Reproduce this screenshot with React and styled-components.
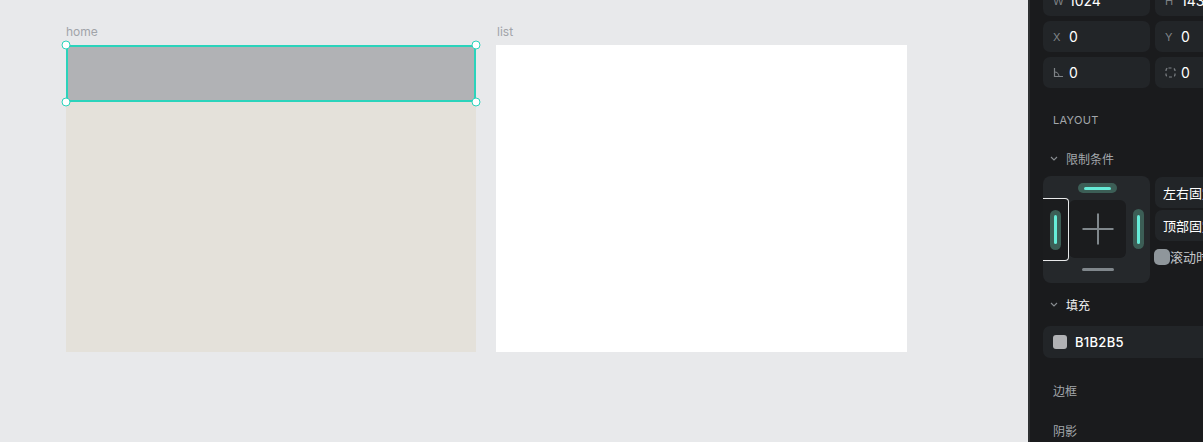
import styled, { createGlobalStyle } from "styled-components";

const GlobalStyle = createGlobalStyle`
    html, body {
        margin: 0;
        padding: 0;
        height: 100%;
        overflow: hidden;
        background: #e8e9eb;
    }
    body {
        font-family: "Inter", "Noto Sans CJK SC", sans-serif;
    }
    #root {
        height: 100%;
    }
`;

const Editor = styled.div`
    display: flex;
    width: 100%;
    height: 442px;
    overflow: hidden;
`;

/* ---------- canvas ---------- */

const Canvas = styled.div`
    flex: 0 0 1028px;
    display: flex;
    gap: 20px;
    padding: 24px 0 0 66px;
    box-sizing: border-box;
    background: #e8e9eb;
`;

const Board = styled.div`
    display: flex;
    flex-direction: column;
`;

const BoardName = styled.div`
    height: 16px;
    margin-bottom: 5px;
    padding-left: ${(p) => p.$indent || 0}px;
    font-size: 12px;
    line-height: 16px;
    color: #a1a4a9;
`;

const BoardPage = styled.div`
    display: flex;
    flex-direction: column;
    width: ${(p) => p.$width}px;
    height: 307px;
    background: ${(p) => p.$bg};
`;

const NavBar = styled.div`
    position: relative;
    height: 57px;
    background: #b1b2b5;
`;

const Selection = styled.div`
    position: absolute;
    inset: 0;
    border: 2px solid #2bd3bb;
    pointer-events: none;
`;

const Handle = styled.span`
    position: absolute;
    width: 7px;
    height: 7px;
    border-radius: 50%;
    background: #fff;
    border: 1.5px solid #2bd3bb;
    transform: translate(-50%, -50%);
    left: ${(p) => (p.$right ? "100%" : "0px")};
    top: ${(p) => (p.$bottom ? "100%" : "0px")};
`;

/* ---------- inspector ---------- */

const Panel = styled.div`
    flex: 0 0 300px;
    display: flex;
    flex-direction: column;
    padding-left: 13px;
    background: #1a1b1d;
    border-left: 2px solid #2e3032;
    overflow: hidden;
    & > * {
        flex-shrink: 0;
    }
`;

const FieldGrid = styled.div`
    display: grid;
    grid-template-columns: 107px 107px;
    grid-auto-rows: 31px;
    gap: 5px;
    margin-top: -15px;
`;

const Field = styled.div`
    display: flex;
    align-items: center;
    padding-left: 10px;
    border-radius: 7px;
    background: #222528;
    color: #fff;
    font-size: 14px;
`;

const FieldLabel = styled.span`
    width: 16px;
    display: flex;
    align-items: center;
    font-size: 11px;
    color: #7f8387;
`;

const SectionLabel = styled.div`
    display: flex;
    align-items: center;
    height: ${(p) => p.$h}px;
    margin-top: ${(p) => p.$mt || 0}px;
    padding-left: ${(p) => (p.$caret ? 7 : 10)}px;
    gap: 8px;
    font-size: ${(p) => (p.$caps ? 11 : 12)}px;
    letter-spacing: ${(p) => (p.$caps ? "0.3px" : "0")};
    color: ${(p) => (p.$bright ? "#f2f3f4" : "#a3a7ab")};
`;

const ConstraintRow = styled.div`
    display: flex;
    gap: 5px;
`;

const ConstraintBox = styled.div`
    display: grid;
    grid-template-columns: 26px 57px 24px;
    grid-template-rows: 24px 58px 25px;
    width: 107px;
    border-radius: 8px;
    background: #25282b;
    flex-shrink: 0;
`;

const Cell = styled.div`
    grid-column: ${(p) => p.$col};
    grid-row: ${(p) => p.$row};
    display: flex;
    align-items: center;
    justify-content: center;
`;

const PickedSide = styled(Cell)`
    margin: -2px 0 -3px;
    background: #1b1c1e;
    border: 1px solid #e9eaeb;
    border-left: none;
    border-radius: 0 4px 4px 0;
`;

const Pill = styled.div`
    display: flex;
    align-items: center;
    justify-content: center;
    width: ${(p) => (p.$vertical ? 11 : 39)}px;
    height: ${(p) => (p.$vertical ? 40 : 10)}px;
    border-radius: 6px;
    background: #3c5e56;
    &:after {
        content: "";
        width: ${(p) => (p.$vertical ? 3 : 27)}px;
        height: ${(p) => (p.$vertical ? 29 : 3)}px;
        border-radius: 2px;
        background: #66ecd8;
    }
`;

const Centre = styled(Cell)`
    position: relative;
    border-radius: 6px;
    background: #1b1c1e;
    &:before, &:after {
        content: "";
        position: absolute;
        left: 50%;
        top: 50%;
        background: #80878c;
        transform: translate(-50%, -50%);
    }
    &:before {
        width: 31px;
        height: 2px;
    }
    &:after {
        width: 2px;
        height: 31px;
    }
`;

const OffBar = styled.div`
    width: 32px;
    height: 3px;
    margin-top: -2px;
    border-radius: 2px;
    background: #80878c;
`;

const ModeColumn = styled.div`
    display: flex;
    flex-direction: column;
    gap: 2px;
    padding-top: 1px;
`;

const Select = styled.div`
    display: flex;
    align-items: center;
    width: 110px;
    height: 31px;
    padding-left: 8px;
    border-radius: 7px;
    background: #222528;
    color: #fff;
    font-size: 13px;
    white-space: nowrap;
`;

const CheckLine = styled.label`
    display: flex;
    align-items: center;
    margin-top: 4px;
    margin-left: -1px;
    font-size: 13px;
    color: #c4c7ca;
    white-space: nowrap;
`;

const CheckBox = styled.span`
    width: 16px;
    height: 16px;
    border-radius: 5px;
    background: #8f969b;
    flex-shrink: 0;
`;

const FillRow = styled.div`
    display: flex;
    align-items: center;
    gap: 8px;
    height: 32px;
    padding-left: 10px;
    border-radius: 7px 0 0 7px;
    background: #222528;
    color: #fff;
    font-size: 13px;
    font-weight: 500;
    letter-spacing: 0.3px;
`;

const Swatch = styled.span`
    width: 14px;
    height: 14px;
    border-radius: 3px;
    background: ${(p) => p.$color};
`;

const Caret = () => (
    <svg width="8" height="5" viewBox="0 0 8 5">
        <path d="M1 1l3 3 3-3" fill="none" stroke="#8a8e92" strokeWidth="1.1" />
    </svg>
);

const AngleIcon = () => (
    <svg width="11" height="11" viewBox="0 0 11 11">
        <path d="M1.5 1v8.5H10" fill="none" stroke="#7f8387" strokeWidth="1.2" />
        <path d="M1.5 5a4.5 4.5 0 0 1 4.5 4.5" fill="none" stroke="#7f8387" strokeWidth="1.1" />
    </svg>
);

const RadiusIcon = () => (
    <svg width="11" height="11" viewBox="0 0 11 11">
        <rect
            x="1" y="1" width="9" height="9" rx="2.5"
            fill="none" stroke="#7f8387" strokeWidth="1.2" strokeDasharray="3 2.4"
        />
    </svg>
);

const fields = [
    { label: "W", value: "1024" },
    { label: "H", value: "143" },
    { label: "X", value: "0" },
    { label: "Y", value: "0" },
    { label: <AngleIcon />, value: "0" },
    { label: <RadiusIcon />, value: "0" },
];

const App = () => {
    return (
        <>
            <GlobalStyle />
            <Editor>
                <Canvas>
                    <Board>
                        <BoardName>home</BoardName>
                        <BoardPage $width={410} $bg="#e4e1da">
                            <NavBar>
                                <Selection />
                                <Handle />
                                <Handle $right />
                                <Handle $bottom />
                                <Handle $right $bottom />
                            </NavBar>
                        </BoardPage>
                    </Board>
                    <Board>
                        <BoardName $indent={1}>list</BoardName>
                        <BoardPage $width={411} $bg="#ffffff" />
                    </Board>
                </Canvas>

                <Panel>
                    <FieldGrid>
                        {fields.map((f, i) => (
                            <Field key={i}>
                                <FieldLabel>{f.label}</FieldLabel>
                                {f.value}
                            </Field>
                        ))}
                    </FieldGrid>

                    <SectionLabel $h={40} $mt={12} $caps>LAYOUT</SectionLabel>
                    <SectionLabel $h={36} $caret>
                        <Caret />
                        限制条件
                    </SectionLabel>

                    <ConstraintRow>
                        <ConstraintBox>
                            <Cell $col={2} $row={1}>
                                <Pill />
                            </Cell>
                            <PickedSide $col={1} $row={2}>
                                <Pill $vertical />
                            </PickedSide>
                            <Centre $col={2} $row={2} />
                            <Cell $col={3} $row={2}>
                                <Pill $vertical />
                            </Cell>
                            <Cell $col={2} $row={3}>
                                <OffBar />
                            </Cell>
                        </ConstraintBox>
                        <ModeColumn>
                            <Select>左右固定</Select>
                            <Select>顶部固定</Select>
                            <CheckLine>
                                <CheckBox />
                                滚动时固定
                            </CheckLine>
                        </ModeColumn>
                    </ConstraintRow>

                    <SectionLabel $h={43} $caret $bright>
                        <Caret />
                        填充
                    </SectionLabel>
                    <FillRow>
                        <Swatch $color="#b1b2b5" />
                        B1B2B5
                    </FillRow>

                    <SectionLabel $h={40} $mt={12}>边框</SectionLabel>
                    <SectionLabel $h={40}>阴影</SectionLabel>
                </Panel>
            </Editor>
        </>
    );
};

export default App;
